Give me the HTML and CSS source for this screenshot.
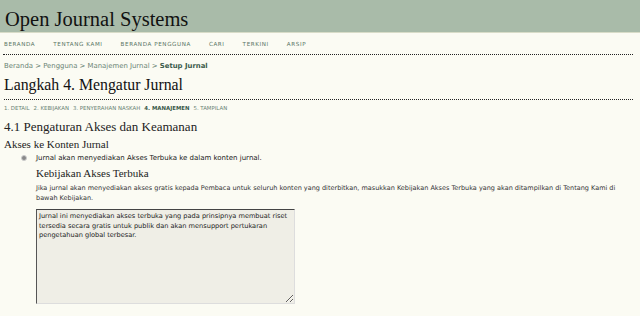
FILE: index.html
```html
<!DOCTYPE html>
<html lang="id">
<head>
    <meta charset="UTF-8">
    <title>Setup Jurnal</title>
    <link rel="stylesheet" href="styles.css">
</head>
<body>
    <div class="header">
        <h1>Open Journal Systems</h1>
    </div>

    <div class="navbar">
        <a href="#">Beranda</a>
        <a href="#">Tentang Kami</a>
        <a href="#">Beranda Pengguna</a>
        <a href="#">Cari</a>
        <a href="#">Terkini</a>
        <a href="#">Arsip</a>
    </div>

    <div class="main">
        <div class="breadcrumb">
            <a href="#">Beranda</a> &gt; <a href="#">Pengguna</a> &gt; <a href="#">Manajemen Jurnal</a> &gt; <a href="#" class="current">Setup Jurnal</a>
        </div>

        <h2 class="page-title">Langkah 4. Mengatur Jurnal</h2>

        <ul class="steps">
            <li><a href="#">1. Detail</a></li>
            <li><a href="#">2. Kebijakan</a></li>
            <li><a href="#">3. Penyerahan Naskah</a></li>
            <li class="current">4. Manajemen</li>
            <li><a href="#">5. Tampilan</a></li>
        </ul>

        <h3 class="section-title">4.1 Pengaturan Akses dan Keamanan</h3>
        <h4 class="sub-title">Akses ke Konten Jurnal</h4>

        <div class="option">
            <span class="radio"></span>
            <span>Jurnal akan menyediakan Akses Terbuka ke dalam konten jurnal.</span>
        </div>

        <div class="policy">
            <h4 class="sub-title">Kebijakan Akses Terbuka</h4>
            <p>Jika jurnal akan menyediakan akses gratis kepada Pembaca untuk seluruh konten yang diterbitkan, masukkan Kebijakan Akses Terbuka yang akan ditampilkan di Tentang Kami di bawah Kebijakan.</p>
            <textarea class="policy-text">Jurnal ini menyediakan akses terbuka yang pada prinsipnya membuat riset tersedia secara gratis untuk publik dan akan mensupport pertukaran pengetahuan global terbesar.</textarea>
        </div>
    </div>
</body>
</html>
```

FILE: styles.css
```css
body {
    margin: 0;
    background-color: #fbfbf3;
    color: #222;
    font-family: "DejaVu Sans", Verdana, sans-serif;
    font-size: 7px;
}
a {
    text-decoration: none;
}
.header {
    background-color: #a9bba9;
    height: 32px;
    border-bottom: 1px solid #d8dcc8;
}
.header h1 {
    margin: 0;
    padding: 7px 0 0 5px;
    font-family: "Liberation Serif", serif;
    font-weight: normal;
    font-size: 20.5px;
    line-height: 24px;
    color: #111;
}
.navbar {
    display: flex;
    margin: 0 7px 0 3px;
    padding: 8px 0 6px 1px;
    border-bottom: 1px dotted #222;
}
.navbar a {
    font-size: 5.6px;
    letter-spacing: 0.6px;
    text-transform: uppercase;
    color: #5a7565;
    margin-right: 18px;
    line-height: 7px;
}
.main {
    padding: 0 4px;
}
.breadcrumb {
    margin-top: 7px;
    font-size: 6.9px;
    color: #6a8474;
}
.breadcrumb a {
    color: #6a8474;
}
.breadcrumb .current {
    font-weight: bold;
    color: #3a5a4a;
}
.page-title {
    margin: 4px 3px 0 0;
    padding-bottom: 4px;
    font-family: "Liberation Serif", serif;
    font-weight: normal;
    font-size: 15.8px;
    line-height: 21px;
    color: #111;
    border-bottom: 1px dotted #222;
}
.steps {
    display: flex;
    list-style: none;
    margin: 5px 0 0 0;
    padding: 0;
    font-size: 5.4px;
    text-transform: uppercase;
    line-height: 7px;
}
.steps li {
    margin-right: 4px;
}
.steps a {
    color: #6a8474;
}
.steps .current {
    font-weight: bold;
    color: #3a5a4a;
}
.section-title {
    margin: 7px 0 0 0;
    font-family: "Liberation Serif", serif;
    font-weight: normal;
    font-size: 13px;
    line-height: 16px;
    color: #222;
}
.sub-title {
    margin: 2px 0 0 0;
    font-family: "Liberation Serif", serif;
    font-weight: normal;
    font-size: 11px;
    line-height: 14px;
    color: #222;
}
.option {
    display: flex;
    align-items: center;
    margin: 2px 0 0 17px;
    line-height: 10px;
}
.radio {
    width: 4px;
    height: 4px;
    border-radius: 50%;
    background-color: #888;
    border: 1px solid #ccc;
    margin-right: 9px;
}
.policy {
    margin-left: 32px;
}
.policy .sub-title {
    margin-top: 3px;
}
.policy p {
    max-width: 582px;
    margin: 3px 0 0 0;
    line-height: 10px;
    font-size: 6.5px;
    color: #333;
}
.policy-text {
    display: block;
    margin-top: 6px;
    width: 253px;
    height: 89px;
    padding: 2px;
    border: 1px solid #ddd;
    border-top: 1px solid #444;
    border-left: 1px solid #555;
    background-color: #efeee6;
    font-family: "DejaVu Sans", Verdana, sans-serif;
    font-size: 6.6px;
    line-height: 9.5px;
    color: #222;
    resize: both;
}
```
